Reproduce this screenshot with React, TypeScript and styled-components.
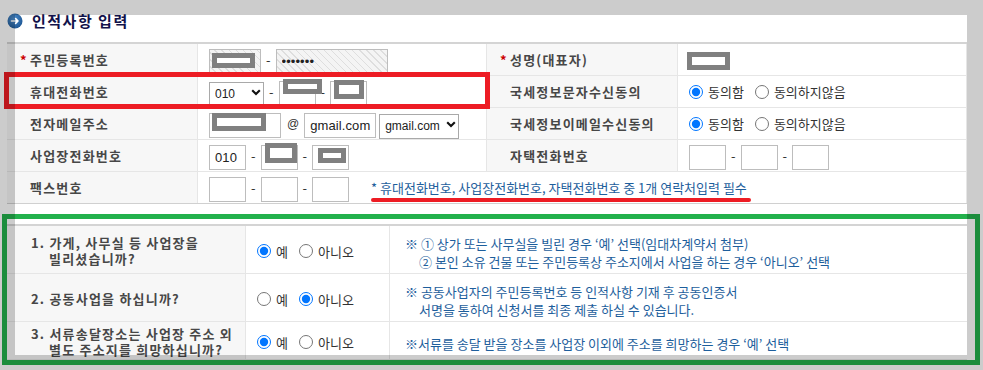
import React from 'react';
import styled, { createGlobalStyle } from 'styled-components';

const GlobalStyle = createGlobalStyle`
  html, body { margin: 0; padding: 0; background: #fff; }
  body {
    width: 983px; height: 370px; overflow: hidden;
    font-family: "Noto Sans CJK KR", "Liberation Sans", sans-serif;
    color: #333;
  }
`;

const Page = styled.div`
  position: relative;
  width: 983px;
  height: 370px;
  overflow: hidden;
  box-sizing: border-box;
  padding-left: 7px;
`;

const Header = styled.h2`
  display: flex;
  align-items: center;
  gap: 9px;
  height: 41px;
  margin: 0;
  padding-bottom: 1px;
  font-size: 15px;
  font-weight: bold;
  letter-spacing: 1.5px;
  color: #12124a;
`;

const InfoTable = styled.table`
  width: 960px;
  table-layout: fixed;
  border-collapse: separate;
  border-spacing: 0;
  border-top: 2px solid #d4d4d4;
  border-bottom: 1px solid #d0d0d0;
`;

const QTable = styled(InfoTable)`
  margin-top: 20px;
`;

const LabelCell = styled.th`
  background: #f7f7f7;
  text-align: left;
  font-size: 13px;
  font-weight: bold;
  letter-spacing: 1.2px;
  color: #474747;
  height: 31px;
  padding: 0 0 0 23px;
  border-right: 1px solid #e6e6e6;
  border-bottom: 1px solid #e6e6e6;
  white-space: nowrap;
  tr:last-child > & { border-bottom: none; }
`;

const ValueCell = styled.td`
  height: 31px;
  padding: 0 0 0 11px;
  border-right: 1px solid #e6e6e6;
  border-bottom: 1px solid #e6e6e6;
  tr:last-child > & { border-bottom: none; }
`;

const Star = styled.span`
  display: inline-block;
  width: 10px;
  margin-left: -10px;
  color: #cc0000;
  letter-spacing: 0;
`;

const Line = styled.div`
  display: flex;
  align-items: center;
`;

const Field = styled.span<{ $w: number }>`
  position: relative;
  display: inline-block;
  width: ${(p) => p.$w}px;
  height: 25px;
`;

const TextInput = styled.input<{ $hatched?: boolean }>`
  width: 100%;
  height: 100%;
  box-sizing: border-box;
  margin: 0;
  border: 1px solid #bdbdbd;
  border-radius: 0;
  padding: 0 4px 0 5px;
  font-family: "Liberation Sans", sans-serif;
  font-size: 13px;
  letter-spacing: 0.1px;
  color: #222;
  outline: none;
  background: ${(p) =>
    p.$hatched
      ? 'repeating-linear-gradient(45deg, #f4f4f4 0 4px, #dedede 4px 5px)'
      : '#fff'};
`;

const Mask = styled.span<{ $x: number; $y: number; $w: number; $h: number }>`
  position: absolute;
  left: ${(p) => p.$x}px;
  top: ${(p) => p.$y}px;
  width: ${(p) => p.$w}px;
  height: ${(p) => p.$h}px;
  box-sizing: border-box;
  border: 5px solid #808080;
  background: #fff;
`;

const NameMask = styled.span`
  display: inline-block;
  width: 43px;
  height: 18px;
  margin: 2px 0 0 -2px;
  box-sizing: border-box;
  border: 5px solid #808080;
  background: #fff;
`;

const SelectWrap = styled.span<{ $w: number }>`
  position: relative;
  display: inline-block;
  width: ${(p) => p.$w}px;
  height: 25px;
`;

const Select = styled.select`
  appearance: none;
  -webkit-appearance: none;
  width: 100%;
  height: 100%;
  box-sizing: border-box;
  margin: 0;
  border: 1px solid #a9a9a9;
  border-radius: 0;
  background: #fff;
  padding: 0 14px 0 5px;
  font-family: "Liberation Sans", sans-serif;
  font-size: 12px;
  color: #222;
  outline: none;
`;

const Chevron = styled.svg`
  position: absolute;
  right: 3px;
  top: 10px;
  pointer-events: none;
`;

const Dash = styled.span`
  margin: 0 5px;
  font-size: 13px;
  color: #333;
`;

const At = styled.span`
  margin: 0 5px 0 6px;
  font-family: "Liberation Sans", sans-serif;
  font-size: 12px;
  color: #333;
`;

const Gap = styled.span<{ $w: number }>`
  display: inline-block;
  width: ${(p) => p.$w}px;
`;

const Notice = styled.span`
  margin-left: 22px;
  font-size: 13px;
  color: #1d5e9c;
`;

const RadioGroup = styled.div`
  display: flex;
  align-items: center;
  gap: 11px;
`;

const RadioOption = styled.label`
  display: inline-flex;
  align-items: center;
  gap: 5px;
  font-size: 13px;
  color: #333;
`;

const Radio = styled.input`
  width: 14px;
  height: 14px;
  margin: 0;
`;

const QLabel = styled.th`
  background: #f7f7f7;
  text-align: left;
  vertical-align: middle;
  font-size: 13px;
  font-weight: bold;
  letter-spacing: 1.2px;
  color: #474747;
  padding: 4px 0 1px 24px;
  white-space: nowrap;
  border-right: 1px solid #e6e6e6;
  border-bottom: 1px solid #e6e6e6;
`;

const LabelLine = styled.div<{ $indent?: number }>`
  height: 16px;
  line-height: 16px;
  padding-left: ${(p) => p.$indent ?? 0}px;
`;

const QChoice = styled.td`
  vertical-align: middle;
  padding: 3px 0 0 11px;
  border-right: 1px solid #e6e6e6;
  border-bottom: 1px solid #e6e6e6;
`;

const QNote = styled.td`
  vertical-align: middle;
  padding: 9px 0 2px 15px;
  font-size: 13px;
  line-height: 18px;
  color: #1d5e9c;
  white-space: nowrap;
  border-bottom: 1px solid #e6e6e6;
`;

const NoteLine = styled.div<{ $indent?: number }>`
  padding-left: ${(p) => p.$indent ?? 0}px;
`;

const Frame = styled.div`
  position: fixed;
  inset: 0;
  border-style: solid;
  border-color: rgba(0, 0, 0, 0.2);
  border-width: 15px 16px 15px 15px;
  pointer-events: none;
  z-index: 10;
`;

const MarkBox = styled.div<{ $color: string; $x: number; $y: number; $w: number; $h: number }>`
  position: absolute;
  left: ${(p) => p.$x}px;
  top: ${(p) => p.$y}px;
  width: ${(p) => p.$w}px;
  height: ${(p) => p.$h}px;
  box-sizing: border-box;
  border: 5px solid ${(p) => p.$color};
  pointer-events: none;
  z-index: 5;
`;

const Underline = styled.div`
  position: absolute;
  left: 371px;
  top: 198px;
  width: 380px;
  height: 4px;
  border-radius: 2px;
  background: #ed1c24;
  z-index: 5;
`;

const TitleIcon = () => (
  <svg width="16" height="16" viewBox="0 0 16 16">
    <defs>
      <radialGradient id="ig" cx="0.4" cy="0.35" r="0.7">
        <stop offset="0" stopColor="#4d8fd0" />
        <stop offset="1" stopColor="#1c5592" />
      </radialGradient>
    </defs>
    <circle cx="8" cy="8" r="7.5" fill="url(#ig)" />
    <path d="M4.5 8h6.5M8.6 5.6L11 8l-2.4 2.4" stroke="#fff" strokeWidth="1.6" fill="none" strokeLinecap="round" strokeLinejoin="round" />
  </svg>
);

const DropSelect = ({ w, value, options }: { w: number; value: string; options: string[] }) => (
  <SelectWrap $w={w}>
    <Select defaultValue={value}>
      {options.map((o) => (
        <option key={o}>{o}</option>
      ))}
    </Select>
    <Chevron width="10" height="7" viewBox="0 0 10 7">
      <path d="M1.2 1.3L5 5.1l3.8-3.8" stroke="#111" strokeWidth="2.1" fill="none" />
    </Chevron>
  </SelectWrap>
);

type Opt = { label: string; checked?: boolean };
const Radios = ({ name, options }: { name: string; options: Opt[] }) => (
  <RadioGroup>
    {options.map((o) => (
      <RadioOption key={o.label}>
        <Radio type="radio" name={name} defaultChecked={o.checked} />
        {o.label}
      </RadioOption>
    ))}
  </RadioGroup>
);

export default function App() {
  return (
    <>
      <GlobalStyle />
      <Page>
        <Header>
          <TitleIcon />
          인적사항 입력
        </Header>

        <InfoTable>
          <colgroup>
            <col style={{ width: 191 }} />
            <col style={{ width: 289 }} />
            <col style={{ width: 191 }} />
            <col style={{ width: 289 }} />
          </colgroup>
          <tbody>
            <tr>
              <LabelCell><Star>*</Star>주민등록번호</LabelCell>
              <ValueCell>
                <Line>
                  <Field $w={52}>
                    <TextInput $hatched readOnly />
                    <Mask $x={3} $y={6} $w={43} $h={15} />
                  </Field>
                  <Dash>-</Dash>
                  <Field $w={112}>
                    <TextInput $hatched type="password" readOnly defaultValue="1234567" />
                  </Field>
                </Line>
              </ValueCell>
              <LabelCell><Star>*</Star>성명(대표자)</LabelCell>
              <ValueCell>
                <Line><NameMask /></Line>
              </ValueCell>
            </tr>
            <tr>
              <LabelCell>휴대전화번호</LabelCell>
              <ValueCell>
                <Line>
                  <DropSelect w={55} value="010" options={['010', '011', '016']} />
                  <Dash>-</Dash>
                  <Field $w={37}>
                    <TextInput readOnly />
                    <Mask $x={4} $y={0} $w={39} $h={15} />
                  </Field>
                  <Dash>-</Dash>
                  <Field $w={37}>
                    <TextInput readOnly />
                    <Mask $x={4} $y={1} $w={30} $h={19} />
                  </Field>
                </Line>
              </ValueCell>
              <LabelCell>국세정보문자수신동의</LabelCell>
              <ValueCell>
                <Radios name="sms" options={[{ label: '동의함', checked: true }, { label: '동의하지않음' }]} />
              </ValueCell>
            </tr>
            <tr>
              <LabelCell>전자메일주소</LabelCell>
              <ValueCell>
                <Line>
                  <Field $w={72}>
                    <TextInput readOnly />
                    <Mask $x={3} $y={2} $w={54} $h={18} />
                  </Field>
                  <At>@</At>
                  <Field $w={72}>
                    <TextInput readOnly defaultValue="gmail.com" />
                  </Field>
                  <Gap $w={3} />
                  <DropSelect w={80} value="gmail.com" options={['gmail.com', 'naver.com', 'daum.net']} />
                </Line>
              </ValueCell>
              <LabelCell>국세정보이메일수신동의</LabelCell>
              <ValueCell>
                <Radios name="mail" options={[{ label: '동의함', checked: true }, { label: '동의하지않음' }]} />
              </ValueCell>
            </tr>
            <tr>
              <LabelCell>사업장전화번호</LabelCell>
              <ValueCell>
                <Line>
                  <Field $w={37}><TextInput readOnly defaultValue="010" /></Field>
                  <Dash>-</Dash>
                  <Field $w={37}>
                    <TextInput readOnly />
                    <Mask $x={4} $y={0} $w={32} $h={20} />
                  </Field>
                  <Dash>-</Dash>
                  <Field $w={37}>
                    <TextInput readOnly />
                    <Mask $x={6} $y={5} $w={28} $h={15} />
                  </Field>
                </Line>
              </ValueCell>
              <LabelCell>자택전화번호</LabelCell>
              <ValueCell>
                <Line>
                  <Field $w={37}><TextInput readOnly /></Field>
                  <Dash>-</Dash>
                  <Field $w={37}><TextInput readOnly /></Field>
                  <Dash>-</Dash>
                  <Field $w={37}><TextInput readOnly /></Field>
                </Line>
              </ValueCell>
            </tr>
            <tr>
              <LabelCell>팩스번호</LabelCell>
              <ValueCell colSpan={3}>
                <Line>
                  <Field $w={37}><TextInput readOnly /></Field>
                  <Dash>-</Dash>
                  <Field $w={37}><TextInput readOnly /></Field>
                  <Dash>-</Dash>
                  <Field $w={37}><TextInput readOnly /></Field>
                  <Notice>* 휴대전화번호, 사업장전화번호, 자택전화번호 중 1개 연락처입력 필수</Notice>
                </Line>
              </ValueCell>
            </tr>
          </tbody>
        </InfoTable>

        <QTable>
          <colgroup>
            <col style={{ width: 239 }} />
            <col style={{ width: 144 }} />
            <col style={{ width: 577 }} />
          </colgroup>
          <tbody>
            <tr>
              <QLabel>
                <LabelLine>1. 가게, 사무실 등 사업장을</LabelLine>
                <LabelLine $indent={18}>빌리셨습니까?</LabelLine>
              </QLabel>
              <QChoice>
                <Radios name="q1" options={[{ label: '예', checked: true }, { label: '아니오' }]} />
              </QChoice>
              <QNote>
                <NoteLine>※ ① 상가 또는 사무실을 빌린 경우 ‘예’ 선택(임대차계약서 첨부)</NoteLine>
                <NoteLine $indent={14}>② 본인 소유 건물 또는 주민등록상 주소지에서 사업을 하는 경우 ‘아니오’ 선택</NoteLine>
              </QNote>
            </tr>
            <tr>
              <QLabel>
                <LabelLine>2. 공동사업을 하십니까?</LabelLine>
              </QLabel>
              <QChoice>
                <Radios name="q2" options={[{ label: '예' }, { label: '아니오', checked: true }]} />
              </QChoice>
              <QNote>
                <NoteLine>※ 공동사업자의 주민등록번호 등 인적사항 기재 후 공동인증서</NoteLine>
                <NoteLine $indent={14}>서명을 통하여 신청서를 최종 제출 하실 수 있습니다.</NoteLine>
              </QNote>
            </tr>
            <tr>
              <QLabel>
                <LabelLine>3. 서류송달장소는 사업장 주소 외</LabelLine>
                <LabelLine $indent={18}>별도 주소지를 희망하십니까?</LabelLine>
              </QLabel>
              <QChoice>
                <Radios name="q3" options={[{ label: '예', checked: true }, { label: '아니오' }]} />
              </QChoice>
              <QNote>
                <NoteLine>※서류를 송달 받을 장소를 사업장 이외에 주소를 희망하는 경우 ‘예’ 선택</NoteLine>
              </QNote>
            </tr>
          </tbody>
        </QTable>

        <MarkBox $color="#ed1c24" $x={4} $y={72} $w={486} $h={37} />
        <Underline />
        <MarkBox $color="#22b14c" $x={2} $y={214} $w={978} $h={151} />
        <Frame />
      </Page>
    </>
  );
}
